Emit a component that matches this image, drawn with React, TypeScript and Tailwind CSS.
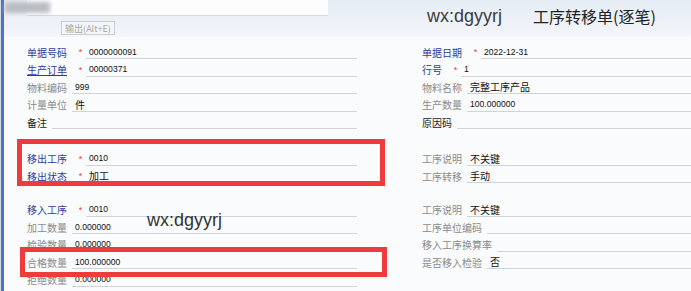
import React from "react";

type Kind = "blue" | "gray" | "black";

const CJK = { fontFamily: '"Noto Sans CJK SC", "Noto Sans", sans-serif' };
const NUM = { fontFamily: '"Liberation Sans", Arial, sans-serif' };

function Row({
  label,
  kind,
  req,
  value,
  link,
  num,
  gap = "ml-[5px]",
}: {
  label: string;
  kind: Kind;
  req?: boolean;
  value?: string;
  link?: boolean;
  num?: boolean;
  gap?: string;
}) {
  const color =
    kind === "blue" ? "text-[#2f3a9e]" : kind === "gray" ? "text-[#8a8a8a]" : "text-[#222222]";
  return (
    <div className="flex h-[17.5px] items-end">
      <div
        className={`flex h-[13px] shrink-0 items-center text-[10px] leading-none ${color} ${link ? "underline" : ""}`}
        style={CJK}
      >
        {label}
      </div>
      {req ? (
        <div className="ml-[11px] mr-[3px] flex h-[13px] w-[5px] shrink-0 items-center justify-center text-[9px] leading-none text-[#e03c3c]" style={NUM}>
          *
        </div>
      ) : null}
      <div
        className={`flex h-[13px] flex-1 items-center border-b border-[#cfd4db] pl-[3px] leading-none text-[#111111] ${req ? "" : gap} ${num ? "text-[8.6px]" : "text-[10px]"}`}
        style={num ? NUM : CJK}
      >
        {value}
      </div>
    </div>
  );
}

export default function App() {
  return (
    <div className="relative flex h-[291px] w-[691px] overflow-hidden bg-[#fafbfd]">
      <div className="w-[1px] shrink-0 bg-[#d3dbe6]" />
      <div className="w-[3px] shrink-0 bg-[#4a76bf]" />
      <div className="flex min-w-0 flex-1 flex-col">
        {/* header */}
        <div className="relative flex h-[37px] shrink-0 bg-gradient-to-b from-[#e6ecf4] to-[#f3f6fa]">
          <div className="flex w-[330px] shrink-0 flex-col">
            <div className="ml-[23px] h-[16px] w-[301px] border-b border-[#d5dbe3] bg-[#fdfdfe]" />
            <div className="ml-[57px] mt-[5px] flex h-[14px] w-[54px] items-center justify-center border border-[#c9ccd1] bg-[#f5f6f8] text-[9px] leading-none text-[#a6a6a6]" style={CJK}>
              输出(Alt+E)
            </div>
          </div>
          <div className="ml-[93px] flex h-[32px] items-center">
            <span className="text-[18px] leading-none text-[#3c3c3c]" style={NUM}>
              wx:dgyyrj
            </span>
            <span className="ml-[31px] text-[16px] leading-none text-[#222222]" style={CJK}>
              工序转移单(逐笔)
            </span>
          </div>
        </div>

        {/* section 1 */}
        <div className="mt-[4.5px] flex pl-[23px]">
          <div className="flex w-[330px] flex-col">
            <Row label="单据号码" kind="blue" req value="0000000091" num />
            <Row label="生产订单" kind="blue" req value="00000371" num link />
            <Row label="物料编码" kind="gray" value="999" num />
            <Row label="计量单位" kind="gray" value="件" />
            <Row label="备注" kind="black" value="" />
          </div>
          <div className="ml-[65px] flex flex-1 flex-col">
            <Row label="单据日期" kind="blue" req value="2022-12-31" num />
            <Row label="行号" kind="blue" req value="1" num />
            <Row label="物料名称" kind="gray" value="完整工序产品" />
            <Row label="生产数量" kind="gray" value="100.000000" num />
            <Row label="原因码" kind="black" value="" />
          </div>
        </div>

        {/* section 2 */}
        <div className="mt-[19px] flex pl-[23px]">
          <div className="flex w-[330px] flex-col">
            <Row label="移出工序" kind="blue" req value="0010" num />
            <Row label="移出状态" kind="blue" req value="加工" />
          </div>
          <div className="ml-[65px] flex flex-1 flex-col">
            <Row label="工序说明" kind="gray" value="不关键" />
            <Row label="工序转移" kind="gray" value="手动" />
          </div>
        </div>

        {/* section 3 */}
        <div className="mt-[16px] flex pl-[23px]">
          <div className="flex w-[330px] flex-col">
            <Row label="移入工序" kind="blue" req value="0010" num />
            <Row label="加工数量" kind="gray" value="0.000000" num />
            <Row label="检验数量" kind="gray" value="0.000000" num />
            <Row label="合格数量" kind="gray" value="100.000000" num />
            <Row label="拒绝数量" kind="gray" value="0.000000" num />
          </div>
          <div className="ml-[65px] flex flex-1 flex-col">
            <Row label="工序说明" kind="gray" value="不关键" />
            <Row label="工序单位编码" kind="gray" value="" />
            <Row label="移入工序换算率" kind="gray" value="" />
            <Row label="是否移入检验" kind="gray" value="否" />
          </div>
        </div>
      </div>

      {/* overlays */}
      <div className="absolute left-[5px] top-[2px] h-[11px] w-[45px] bg-[#b9bcc2] blur-[2px]" />
      <div className="absolute left-[147px] top-[211px] text-[18px] leading-none text-[#333333]" style={NUM}>
        wx:dgyyrj
      </div>
      <div className="absolute left-[17px] top-[139px] h-[47px] w-[368px] border-[5px] border-[#ef3b3b]" />
      <div className="absolute left-[20px] top-[247px] h-[30px] w-[367px] border-[5px] border-[#ef3b3b]" />
    </div>
  );
}
